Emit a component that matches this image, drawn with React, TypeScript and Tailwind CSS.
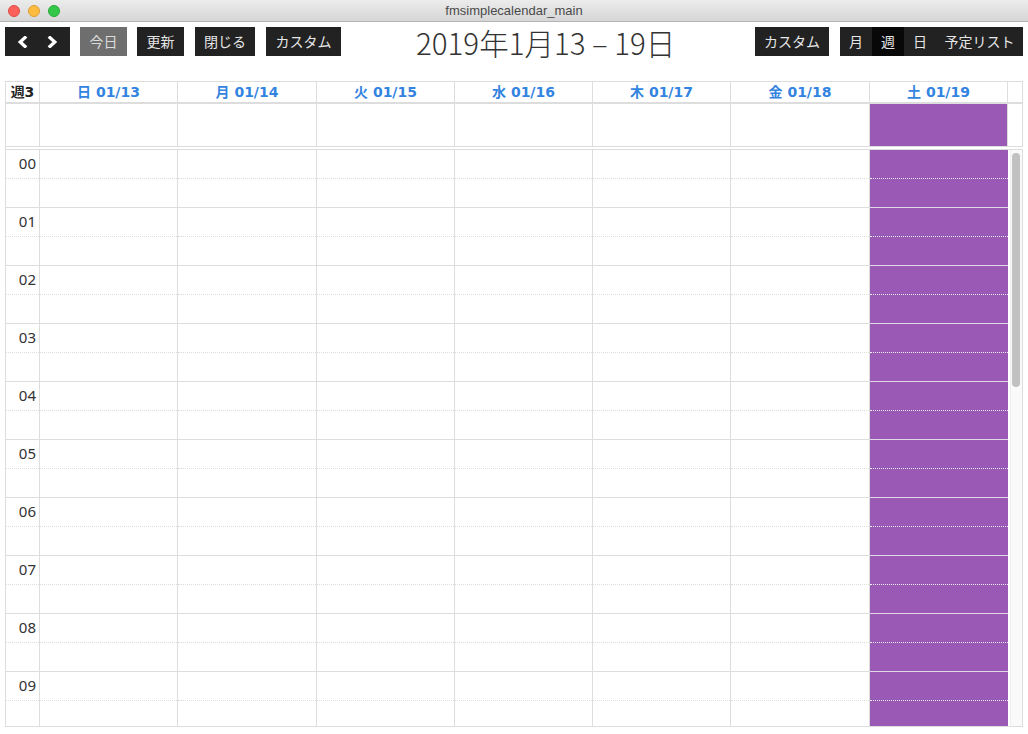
import React from "react";

const COLS = ["w-[138px]", "w-[139px]", "w-[138px]", "w-[138px]", "w-[138px]", "w-[139px]"];
const DAYS = ["日 01/13", "月 01/14", "火 01/15", "水 01/16", "木 01/17", "金 01/18", "土 01/19"];
const HOURS = ["00", "01", "02", "03", "04", "05", "06", "07", "08", "09"];
const SLOTS = Array.from({ length: 20 }, (_, i) => i);

const jp = { fontFamily: '"Noto Sans CJK JP", "Noto Sans", sans-serif' };
const head = { fontFamily: '"DejaVu Sans", "Noto Sans CJK JP", sans-serif' };

function Btn({ children, w, bg = "bg-[#222222]", text = "text-[#e6e6e6]" }: { children: React.ReactNode; w: string; bg?: string; text?: string }) {
  return (
    <div className={`${w} h-[29px] ${bg} ${text} flex items-center justify-center text-[14px]`} style={jp}>
      {children}
    </div>
  );
}

function Chevron({ left }: { left?: boolean }) {
  return (
    <svg width="11" height="12" viewBox="0 0 11 12">
      <polyline
        points={left ? "8,1.6 3.2,6 8,10.4" : "3,1.6 7.8,6 3,10.4"}
        fill="none"
        stroke="#ffffff"
        strokeWidth="3.3"
        strokeLinecap="square"
      />
    </svg>
  );
}

export default function App() {
  return (
    <div className="w-[1028px] h-[734px] bg-white overflow-hidden">
      {/* title bar */}
      <div className="relative h-[22px] bg-gradient-to-b from-[#ececec] to-[#d6d6d6] border-b border-[#b4b4b4] flex items-center justify-center">
        <div className="absolute left-[8px] top-[5px] flex gap-[8px]">
          <div className="w-[12px] h-[12px] rounded-full bg-[#fc605b] border border-[#de4a44]" />
          <div className="w-[12px] h-[12px] rounded-full bg-[#fdbc40] border border-[#de9f34]" />
          <div className="w-[12px] h-[12px] rounded-full bg-[#34c84a] border border-[#27aa35]" />
        </div>
        <span className="text-[13px] text-[#4a4a4a]" style={{ fontFamily: '"Liberation Sans", Arial, sans-serif' }}>
          fmsimplecalendar_main
        </span>
      </div>

      {/* toolbar */}
      <div className="relative mt-[5px] h-[29px] px-[5px] flex items-center justify-between">
        <div className="flex items-center">
          <div className="w-[65px] h-[29px] bg-[#222222] flex items-center justify-between px-[12px]">
            <Chevron left />
            <Chevron />
          </div>
          <div className="ml-[10px]">
            <Btn w="w-[47px]" bg="bg-[#6e6e6e]" text="text-[#dcdcdc]">今日</Btn>
          </div>
          <div className="ml-[10px]">
            <Btn w="w-[47px]">更新</Btn>
          </div>
          <div className="ml-[11px]">
            <Btn w="w-[60px]">閉じる</Btn>
          </div>
          <div className="ml-[11px]">
            <Btn w="w-[75px]">カスタム</Btn>
          </div>
        </div>
        <div className="absolute left-[416px] top-[-4px] text-[29.5px] font-light text-[#333333] leading-[38px]" style={jp}>
          2019年1月13 – 19日
        </div>
        <div className="flex items-center">
          <Btn w="w-[74px]">カスタム</Btn>
          <div className="ml-[11px] flex">
            <Btn w="w-[32px]">月</Btn>
            <Btn w="w-[32px]" bg="bg-[#080808]">週</Btn>
            <Btn w="w-[32px]">日</Btn>
            <Btn w="w-[87px]">予定リスト</Btn>
          </div>
        </div>
      </div>

      {/* calendar */}
      <div className="mt-[25px] ml-[5px] w-[1018px] border-l border-t border-[#dddddd]">
        {/* header */}
        <div className="flex">
          <div className="w-[34px] h-[21px] border-r border-b border-[#dddddd] flex items-center justify-center text-[14px] font-bold text-[#222222]" style={head}>
            週3
          </div>
          {DAYS.map((d, i) => (
            <div
              key={d}
              className={`${i < 6 ? COLS[i] : "w-[138px]"} h-[21px] border-r border-b border-[#dddddd] flex items-center justify-center text-[14px] font-bold text-[#3384e0]`}
              style={head}
            >
              {d}
            </div>
          ))}
          <div className="w-[15px] h-[21px] border-r border-b border-[#dddddd]" />
        </div>
        {/* all-day */}
        <div className="flex">
          <div className="w-[34px] h-[44px] border-r border-t border-b border-[#dddddd]" />
          {COLS.map((c, i) => (
            <div key={i} className={`${c} h-[44px] border-r border-t border-b border-[#dddddd]`} />
          ))}
          <div className="w-[138px] h-[44px] border-r border-t border-b border-[#dddddd] bg-[#9b59b6]" />
          <div className="w-[15px] h-[44px] border-r border-t border-b border-[#dddddd]" />
        </div>
        <div className="h-[2px]" />
        {/* time grid */}
        <div className="flex h-[578px] border-t border-b border-[#dddddd] overflow-hidden">
          <div className="w-[34px] shrink-0 border-r border-[#dddddd] flex flex-col">
            {SLOTS.map((s) => (
              <div
                key={s}
                className={`h-[29px] shrink-0 border-b border-[#dddddd] ${s % 2 === 0 ? "border-dotted" : "border-solid"} flex justify-end pr-[3px] pt-[3px] text-[15px] leading-[20px] text-[#333333]`}
                style={{ fontFamily: '"Noto Sans", sans-serif' }}
              >
                {s % 2 === 0 ? HOURS[s / 2] : ""}
              </div>
            ))}
          </div>
          {COLS.map((c, i) => (
            <div key={i} className={`${c} shrink-0 border-r border-[#dddddd] flex flex-col`}>
              {SLOTS.map((s) => (
                <div
                  key={s}
                  className={`h-[29px] shrink-0 border-b border-[#dddddd] ${s % 2 === 0 ? "border-dotted" : "border-solid"}`}
                />
              ))}
            </div>
          ))}
          <div className="w-[138px] shrink-0 bg-[#9b59b6] flex flex-col">
            {SLOTS.map((s) => (
              <div
                key={s}
                className={`h-[29px] shrink-0 border-b ${s % 2 === 0 ? "border-dotted border-[#eeeeee]" : "border-solid border-[#e2d6ea]"}`}
              />
            ))}
          </div>
          <div className="w-[15px] shrink-0 border-r border-[#dddddd] bg-white pl-[2px]">
            <div className="h-full bg-[#fafafa] border-l border-[#eeeeee] pt-[3px]">
              <div className="ml-[1px] w-[8px] h-[234px] rounded-full bg-[#c1c1c1]" />
            </div>
          </div>
        </div>
      </div>
    </div>
  );
}
